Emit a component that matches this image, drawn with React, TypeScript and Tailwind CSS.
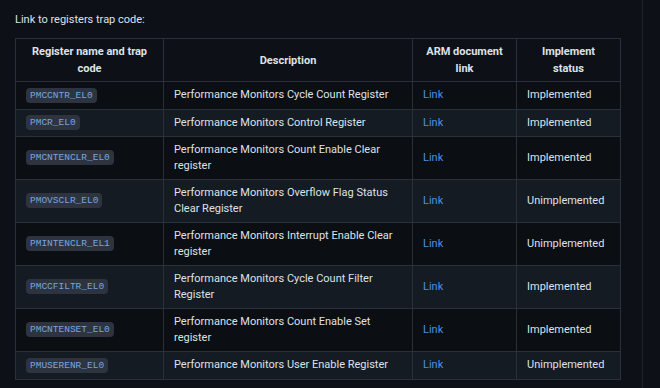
const rows = [
  { code: 'PMCCNTR_EL0', desc: 'Performance Monitors Cycle Count Register', status: 'Implemented' },
  { code: 'PMCR_EL0', desc: 'Performance Monitors Control Register', status: 'Implemented' },
  { code: 'PMCNTENCLR_EL0', desc: 'Performance Monitors Count Enable Clear register', status: 'Implemented' },
  { code: 'PMOVSCLR_EL0', desc: 'Performance Monitors Overflow Flag Status Clear Register', status: 'Unimplemented' },
  { code: 'PMINTENCLR_EL1', desc: 'Performance Monitors Interrupt Enable Clear register', status: 'Unimplemented' },
  { code: 'PMCCFILTR_EL0', desc: 'Performance Monitors Cycle Count Filter Register', status: 'Implemented' },
  { code: 'PMCNTENSET_EL0', desc: 'Performance Monitors Count Enable Set register', status: 'Implemented' },
  { code: 'PMUSERENR_EL0', desc: 'Performance Monitors User Enable Register', status: 'Unimplemented' },
];

function Code({ children }: { children: string }) {
  return (
    <code className="rounded-[4px] bg-[#2d3440] px-[4px] py-[2px] font-['Liberation_Mono',monospace] text-[9.5px] text-[#79a5de]">
      {children}
    </code>
  );
}

export default function App() {
  return (
    <div className="flex h-[388px] w-[660px] overflow-hidden bg-[#0d1117] font-['Roboto',sans-serif] text-[11px] text-[#dde2e8]">
      <div className="w-[642px] shrink-0 px-[15px] pt-[11px]">
        <p className="leading-[17px]">Link to registers trap code:</p>

        <table className="mt-[10px] w-[605px] table-fixed border-collapse leading-[17px]">
          <colgroup>
            <col className="w-[148px]" />
            <col className="w-[249px]" />
            <col className="w-[104px]" />
            <col className="w-[104px]" />
          </colgroup>
          <thead>
            <tr className="bg-[#0d1117]">
              <th className="border border-[#2a3038] px-[10px] py-1 font-bold">Register name and trap code</th>
              <th className="border border-[#2a3038] px-[10px] py-1 font-bold">Description</th>
              <th className="border border-[#2a3038] px-[10px] py-1 font-bold">ARM document link</th>
              <th className="border border-[#2a3038] px-[10px] py-1 font-bold">Implement status</th>
            </tr>
          </thead>
          <tbody className="leading-[16.5px]">
            {rows.map((r, i) => (
              <tr key={r.code} className={i % 2 === 1 ? 'bg-[#151b23]' : 'bg-[#0b0e13]'}>
                <td className="border border-[#2a3038] px-[10px] py-[4.5px]">
                  <Code>{r.code}</Code>
                </td>
                <td className="border border-[#2a3038] px-[10px] py-[4.5px]">{r.desc}</td>
                <td className="border border-[#2a3038] px-[10px] py-[4.5px]">
                  <a className="text-[#4f8fe0]">Link</a>
                </td>
                <td className="border border-[#2a3038] px-[10px] py-[4.5px]">{r.status}</td>
              </tr>
            ))}
          </tbody>
        </table>

        <p className="mt-[7px] leading-[17px]">
          The current status is about the <Code>PMU</Code> based and will complete the <Code>PMU</Code> based and soft trap code.
        </p>
      </div>
      <div className="w-px shrink-0 bg-[#1f242b]" />
      <div className="flex-1 bg-[#0d1117]" />
    </div>
  );
}
